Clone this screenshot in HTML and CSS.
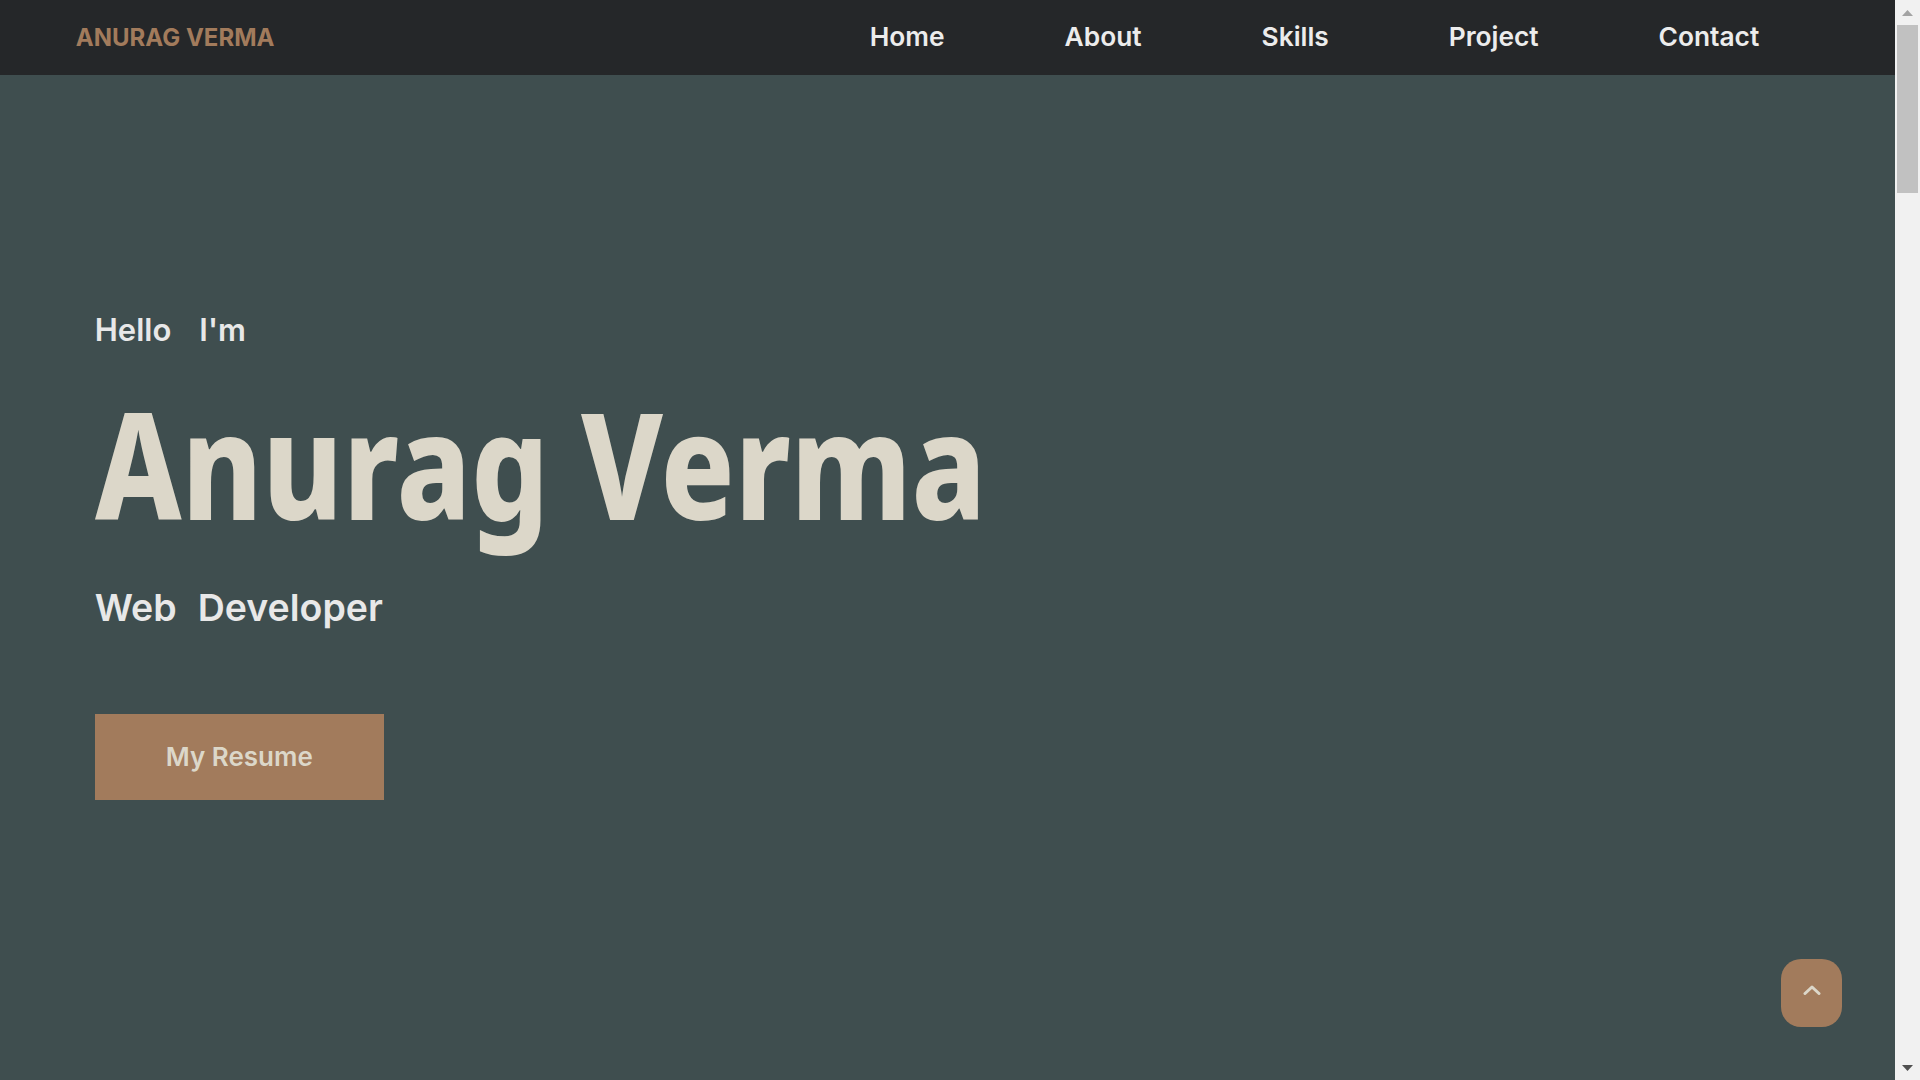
FILE: index.html
```html
<!DOCTYPE html>
<html lang="en">
<head>
<meta charset="UTF-8">
<title>Anurag Verma | Portfolio</title>
<link rel="stylesheet" href="styles.css">
</head>
<body>
<div class="page">
  <header class="navbar">
    <a class="logo" href="#home">ANURAG VERMA</a>
    <nav>
      <ul class="nav-links">
        <li><a href="#home">Home</a></li>
        <li><a href="#about">About</a></li>
        <li><a href="#skills">Skills</a></li>
        <li><a href="#project">Project</a></li>
        <li><a href="#contact">Contact</a></li>
      </ul>
    </nav>
  </header>

  <main class="hero" id="home">
    <h3 class="hello"><span>Hello</span><span class="w2">I'm</span></h3>
    <h1 class="name">Anurag Verma</h1>
    <h2 class="role"><span>Web</span><span class="w3">Developer</span></h2>
    <a class="resume-btn" href="#">My Resume</a>
  </main>

  <a class="to-top" href="#home" aria-label="Back to top">
    <svg width="18" height="10" viewBox="0 0 18 10"><path d="M2 8.5 L9 2 L16 8.5" fill="none" stroke="#dcd7c9" stroke-width="3" stroke-linecap="round" stroke-linejoin="round"/></svg>
  </a>
</div>

<div class="scrollbar" aria-hidden="true">
  <div class="sb-btn"><svg width="11" height="6" viewBox="0 0 11 6"><path d="M0 6 L5.5 0 L11 6 Z" fill="#a3a3a3"/></svg></div>
  <div class="sb-track"><div class="sb-thumb"></div></div>
  <div class="sb-btn"><svg width="11" height="6" viewBox="0 0 11 6"><path d="M0 0 L11 0 L5.5 6 Z" fill="#505050"/></svg></div>
</div>
</body>
</html>
```

FILE: styles.css
```css
* { box-sizing: border-box; }

html, body { height: 100%; }

body {
  margin: 0;
  display: flex;
  overflow: hidden;
  background: #3f4e4f;
  font-family: Inter, "Noto Sans", sans-serif;
  color: #e8e8e8;
}

.page {
  position: relative;
  flex: 1;
  display: flex;
  flex-direction: column;
  min-width: 0;
}

/* fake browser scrollbar */
.scrollbar {
  width: 25px;
  flex: none;
  background: #f1f1f1;
  display: flex;
  flex-direction: column;
}
.sb-btn {
  height: 25px;
  display: flex;
  align-items: center;
  justify-content: center;
}
.sb-btn svg { display: block; }
.sb-track {
  flex: 1;
  padding: 0 2px;
}
.sb-thumb {
  height: 168px;
  background: #c1c1c1;
}

.navbar {
  height: 75px;
  flex: none;
  padding: 0 4%;
  background: #252729;
  display: flex;
  align-items: center;
  justify-content: space-between;
}

.logo {
  color: #a27b5c;
  font-size: 24px;
  font-weight: 700;
  text-decoration: none;
  line-height: 1;
}

.nav-links {
  list-style: none;
  margin: 0;
  padding: 0;
  display: flex;
}

.nav-links a {
  display: block;
  padding: 0 60px;
  color: #ececec;
  font-size: 26.3px;
  font-weight: 600;
  text-decoration: none;
  line-height: 1;
}

.hero {
  flex: 1;
  padding: 239px 5% 0;
}

.hello {
  margin: 0;
  font-size: 31px;
  font-weight: 600;
  line-height: 1;
  color: #e8e8e8;
}
.hello .w2 { margin-left: 28px; }

.name {
  margin: 44px 0 0;
  font-family: "Noto Sans", "Open Sans", sans-serif;
  font-weight: 800;
  font-size: 148px;
  line-height: 1;
  color: #dcd7c9;
  white-space: nowrap;
  transform: scaleX(0.827);
  transform-origin: left center;
}

.role {
  margin: 52px 0 0;
  font-size: 37.5px;
  font-weight: 600;
  line-height: 1;
  color: #e8e8e8;
}
.role .w3 { margin-left: 21px; }

.resume-btn {
  margin-top: 87px;
  width: 289px;
  height: 86px;
  display: flex;
  align-items: center;
  justify-content: center;
  background: #a27b5c;
  color: #dcd7c9;
  font-size: 26px;
  font-weight: 600;
  text-decoration: none;
}

.to-top {
  position: absolute;
  right: 53px;
  bottom: 53px;
  width: 61px;
  height: 68px;
  border-radius: 20px;
  background: #a27b5c;
  display: flex;
  align-items: center;
  justify-content: center;
  padding-bottom: 6px;
}
.to-top svg { display: block; }
```
